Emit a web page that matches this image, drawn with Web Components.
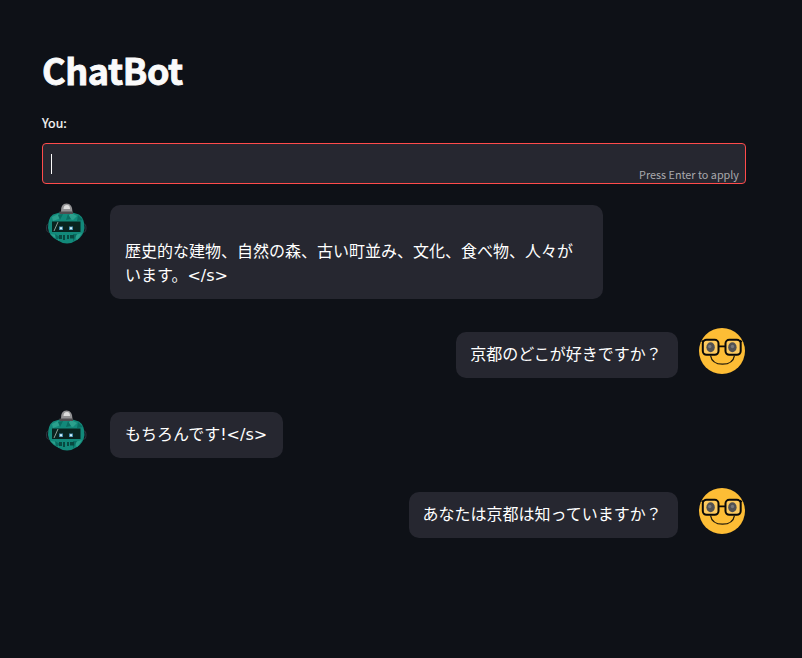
<!DOCTYPE html>
<html lang="ja">
<head>
<meta charset="utf-8">
<title>ChatBot</title>
<style>
body{margin:0;background:#0e1117;color:#fafafa;font-family:"Noto Sans CJK JP",sans-serif}
</style>
</head>
<body>
<chat-app>
  <text-field label="You:" hint="Press Enter to apply"></text-field>
  <chat-message from="bot"><br>歴史的な建物、自然の森、古い町並み、文化、食べ物、人々がいます。&lt;/s&gt;</chat-message>
  <chat-message from="user">京都のどこが好きですか？</chat-message>
  <chat-message from="bot">もちろんです!&lt;/s&gt;</chat-message>
  <chat-message from="user">あなたは京都は知っていますか？</chat-message>
</chat-app>
<script>
class ChatApp extends HTMLElement{
  constructor(){super();this.attachShadow({mode:'open'}).innerHTML=`
<style>
:host{display:block;box-sizing:border-box;height:658px;padding:41px 56px 0 42px;overflow:hidden}
h1{margin:0;font-size:36px;line-height:57px;height:57px;font-weight:700;letter-spacing:-.4px;-webkit-text-stroke:.9px #fafafa}
</style><h1>ChatBot</h1><slot></slot>`;}
}
class TextField extends HTMLElement{
  constructor(){super();this.attachShadow({mode:'open'}).innerHTML=`
<style>
:host{display:block;padding-top:15px;margin-bottom:16px}
label{display:block;height:30px;line-height:20px;font-size:12.5px;-webkit-text-stroke:.2px #fafafa}
.box{box-sizing:border-box;height:41px;display:flex;justify-content:space-between;align-items:center;border:1px solid #ff4b4b;border-radius:4px;background:#262730;padding:0 6px 0 8px}
.caret{width:1px;height:20px;background:#fafafa}
.hint{align-self:flex-end;font-size:10.8px;line-height:16px;padding-bottom:1px;color:#a9a9ad}
</style><label></label><div class="box"><span class="caret"></span><span class="hint"></span></div>`;}
  connectedCallback(){
    this.shadowRoot.querySelector('label').textContent=this.getAttribute('label');
    this.shadowRoot.querySelector('.hint').textContent=this.getAttribute('hint');
  }
}
const robot=`<svg viewBox="0 0 48 48">
<defs><clipPath id="h"><path d="M11 14.500Q24 9 37 14.500Q42.500 18 42.500 28Q41.500 36 35 40Q25 47 15 40Q7 36 6 28Q6 18 11 14.500Z"/></clipPath></defs>
<ellipse cx="6.800" cy="28" rx="2.300" ry="4.200" fill="#10151d" stroke="#30353e"/><ellipse cx="41.700" cy="28" rx="2.300" ry="4.200" fill="#10151d" stroke="#30353e"/>
<g clip-path="url(#h)"><rect width="48" height="48" fill="#12897a"/>
<path d="M10 17l6-3 3 4-8 3zM29 13l6 3-4 4-6-2zM8 34l7 1 2 6zM33 35l7-2-5 8z" fill="#2ba08d"/>
<path d="M16 15l5-1-3 6zM36 15l5 5-6 1zM26 14l3 5-5 1zM13 34l5 3-4 4zM35 34l-4 8v-8z" fill="#0a6d62"/>
<path d="M10 21.500h28.500v10.500H10z" fill="#09231f"/>
<path d="M17 35h3v4h-3zM21 35h2v5h-2zM25 35h2v4h-2zM28 35h4v3.500h-4z" fill="#084840"/></g>
<path d="M19 12Q18.500 3.500 24.500 3.500T30.500 12Z" fill="#929294"/><path d="M21.500 9q0-4 3.500-4 3 0 3 4" fill="#dcdcdc"/>
<path d="M17.500 11.500h13.500v2.500h-13.500z" fill="#4f4d50"/>
<path d="M16 22l-4 9" stroke="#8fa199" stroke-width="1"/>
<path d="M17 26.500h4v3.500h-4zM27 26.500h4v3.500h-4z" fill="#478cae"/><path d="M18 27.300h2v2h-2zM28 27.300h2v2h-2z" fill="#d6f4fc"/>
</svg>`;
const face=`<svg viewBox="0 0 48 48" fill="none">
<circle cx="24" cy="24" r="23" fill="#fdbd35"/>
<rect x="4.800" y="12.800" width="15.700" height="15" rx="3.800" fill="#fdca5e" stroke="#090909" stroke-width="2"/>
<rect x="27.500" y="12.800" width="15.200" height="15" rx="3.800" fill="#fdca5e" stroke="#090909" stroke-width="2"/>
<path d="M20.500 19.400h7M3.800 15l2-1.500M43.800 15l-2-1.500" stroke="#090909" stroke-width="1.800"/>
<ellipse cx="12.600" cy="20.300" rx="4.200" ry="5" fill="#515153"/><ellipse cx="34.400" cy="20.300" rx="4.200" ry="5" fill="#515153"/>
<circle cx="11.800" cy="19.500" r="1.700" fill="#777779"/><circle cx="34.500" cy="19.500" r="1.700" fill="#777779"/>
<path d="M12.500 28.500Q14 37.200 24.500 37.200T36.500 28.500" stroke="#20190b" stroke-width="1.300"/>
</svg>`;
class ChatAvatar extends HTMLElement{
  constructor(){super();this.attachShadow({mode:'open'});}
  connectedCallback(){this.shadowRoot.innerHTML=`<style>:host{display:block;flex:none;width:48px;height:48px}svg{display:block;width:48px;height:48px}</style>`+(this.getAttribute('kind')==='bot'?robot:face);}
}
class ChatMessage extends HTMLElement{
  constructor(){super();this.attachShadow({mode:'open'});}
  connectedCallback(){this.shadowRoot.innerHTML=`
<style>
:host{display:flex;box-sizing:border-box;min-height:80px;padding-bottom:28px;gap:20px;align-items:flex-start;font:16px/24px "DejaVu Sans","Noto Sans CJK JP",sans-serif;color:#fff}
:host([from=user]){flex-direction:row-reverse}
.bubble{box-sizing:border-box;max-width:493px;margin-top:5px;padding:11px 15.500px 11px 15px;background:#262730;border-radius:10px}
:host([from=user]) .bubble{padding:11px 16.300px 11px 14px}
</style><chat-avatar kind="${this.getAttribute('from')}"></chat-avatar><div class="bubble"><slot></slot></div>`;}
}
customElements.define('chat-app',ChatApp);
customElements.define('text-field',TextField);
customElements.define('chat-avatar',ChatAvatar);
customElements.define('chat-message',ChatMessage);
</script>
</body>
</html>
